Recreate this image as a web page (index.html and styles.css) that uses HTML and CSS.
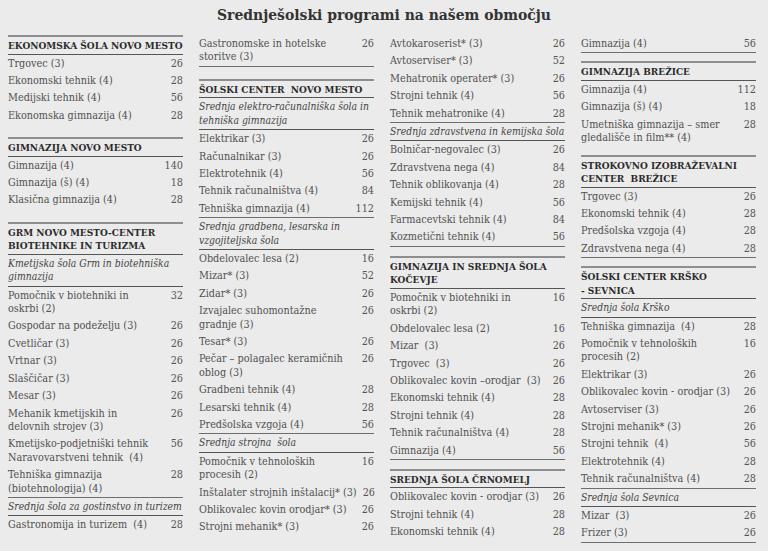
FILE: index.html
```html
<!DOCTYPE html>
<html lang="sl">
<head>
<meta charset="utf-8">
<title>Srednješolski programi na našem območju</title>
<link rel="stylesheet" href="styles.css">
</head>
<body>
<h1 class="title">Srednješolski programi na našem območju</h1>
<div class="cols">
  <div class="col">
    <div class="sec first">
      <div class="hdr">EKONOMSKA ŠOLA NOVO MESTO</div>
      <div class="row"><span class="lbl">Trgovec (3)</span><span class="num">26</span></div>
      <div class="row"><span class="lbl">Ekonomski tehnik (4)</span><span class="num">28</span></div>
      <div class="row"><span class="lbl">Medijski tehnik (4)</span><span class="num">56</span></div>
      <div class="row"><span class="lbl">Ekonomska gimnazija (4)</span><span class="num">28</span></div>
    </div>
    <div class="sec">
      <div class="hdr">GIMNAZIJA NOVO MESTO</div>
      <div class="row"><span class="lbl">Gimnazija (4)</span><span class="num">140</span></div>
      <div class="row"><span class="lbl">Gimnazija (š) (4)</span><span class="num">18</span></div>
      <div class="row"><span class="lbl">Klasična gimnazija (4)</span><span class="num">28</span></div>
    </div>
    <div class="sec">
      <div class="hdr">GRM NOVO MESTO-CENTER<br>BIOTEHNIKE IN TURIZMA</div>
      <div class="sub">Kmetijska šola Grm in biotehniška<br>gimnazija</div>
      <div class="row"><span class="lbl">Pomočnik v biotehniki in<br>oskrbi (2)</span><span class="num">32</span></div>
      <div class="row"><span class="lbl">Gospodar na podeželju (3)</span><span class="num">26</span></div>
      <div class="row"><span class="lbl">Cvetličar (3)</span><span class="num">26</span></div>
      <div class="row"><span class="lbl">Vrtnar (3)</span><span class="num">26</span></div>
      <div class="row"><span class="lbl">Slaščičar (3)</span><span class="num">26</span></div>
      <div class="row"><span class="lbl">Mesar (3)</span><span class="num">26</span></div>
      <div class="row"><span class="lbl">Mehanik kmetijskih in<br>delovnih strojev (3)</span><span class="num">26</span></div>
      <div class="row"><span class="lbl">Kmetijsko-podjetniški tehnik<br>Naravovarstveni tehnik&nbsp; (4)</span><span class="num">56</span></div>
      <div class="row end"><span class="lbl">Tehniška gimnazija<br>(biotehnologija) (4)</span><span class="num">28</span></div>
      <div class="sub">Srednja šola za gostinstvo in turizem</div>
      <div class="row"><span class="lbl">Gastronomija in turizem&nbsp; (4)</span><span class="num">28</span></div>
    </div>
  </div>

  <div class="col">
    <div class="row end"><span class="lbl">Gastronomske in hotelske<br>storitve (3)</span><span class="num">26</span></div>
    <div class="sec wide">
      <div class="hdr">ŠOLSKI CENTER&nbsp; NOVO MESTO</div>
      <div class="sub">Srednja elektro-računalniška šola in<br>tehniška gimnazija</div>
      <div class="row"><span class="lbl">Elektrikar (3)</span><span class="num">26</span></div>
      <div class="row"><span class="lbl">Računalnikar (3)</span><span class="num">26</span></div>
      <div class="row"><span class="lbl">Elektrotehnik (4)</span><span class="num">56</span></div>
      <div class="row"><span class="lbl">Tehnik računalništva (4)</span><span class="num">84</span></div>
      <div class="row end"><span class="lbl">Tehniška gimnazija (4)</span><span class="num">112</span></div>
      <div class="sub">Srednja gradbena, lesarska in<br>vzgojiteljska šola</div>
      <div class="row"><span class="lbl">Obdelovalec lesa (2)</span><span class="num">16</span></div>
      <div class="row"><span class="lbl">Mizar* (3)</span><span class="num">52</span></div>
      <div class="row"><span class="lbl">Zidar* (3)</span><span class="num">26</span></div>
      <div class="row"><span class="lbl">Izvajalec suhomontažne<br>gradnje (3)</span><span class="num">26</span></div>
      <div class="row"><span class="lbl">Tesar* (3)</span><span class="num">26</span></div>
      <div class="row"><span class="lbl">Pečar – polagalec keramičnih<br>oblog (3)</span><span class="num">26</span></div>
      <div class="row"><span class="lbl">Gradbeni tehnik (4)</span><span class="num">28</span></div>
      <div class="row"><span class="lbl">Lesarski tehnik (4)</span><span class="num">28</span></div>
      <div class="row end"><span class="lbl">Predšolska vzgoja (4)</span><span class="num">56</span></div>
      <div class="sub">Srednja strojna&nbsp; šola</div>
      <div class="row"><span class="lbl">Pomočnik v tehnoloških<br>procesih (2)</span><span class="num">16</span></div>
      <div class="row"><span class="lbl">Inštalater strojnih inštalacij* (3)</span><span class="num">26</span></div>
      <div class="row"><span class="lbl">Oblikovalec kovin orodjar* (3)</span><span class="num">26</span></div>
      <div class="row"><span class="lbl">Strojni mehanik* (3)</span><span class="num">26</span></div>
    </div>
  </div>

  <div class="col">
    <div class="row"><span class="lbl">Avtokaroserist* (3)</span><span class="num">26</span></div>
    <div class="row"><span class="lbl">Avtoserviser* (3)</span><span class="num">52</span></div>
    <div class="row"><span class="lbl">Mehatronik operater* (3)</span><span class="num">26</span></div>
    <div class="row"><span class="lbl">Strojni tehnik (4)</span><span class="num">56</span></div>
    <div class="row end"><span class="lbl">Tehnik mehatronike (4)</span><span class="num">28</span></div>
    <div class="sub">Srednja zdravstvena in kemijska šola</div>
    <div class="row"><span class="lbl">Bolničar-negovalec (3)</span><span class="num">26</span></div>
    <div class="row"><span class="lbl">Zdravstvena nega (4)</span><span class="num">84</span></div>
    <div class="row"><span class="lbl">Tehnik oblikovanja (4)</span><span class="num">28</span></div>
    <div class="row"><span class="lbl">Kemijski tehnik (4)</span><span class="num">56</span></div>
    <div class="row"><span class="lbl">Farmacevtski tehnik (4)</span><span class="num">84</span></div>
    <div class="row end"><span class="lbl">Kozmetični tehnik (4)</span><span class="num">56</span></div>
    <div class="sec after">
      <div class="hdr">GIMNAZIJA IN SREDNJA ŠOLA<br>KOČEVJE</div>
      <div class="row"><span class="lbl">Pomočnik v biotehniki in<br>oskrbi (2)</span><span class="num">16</span></div>
      <div class="row"><span class="lbl">Obdelovalec lesa (2)</span><span class="num">16</span></div>
      <div class="row"><span class="lbl">Mizar&nbsp; (3)</span><span class="num">26</span></div>
      <div class="row"><span class="lbl">Trgovec&nbsp; (3)</span><span class="num">26</span></div>
      <div class="row"><span class="lbl">Oblikovalec kovin –orodjar&nbsp; (3)</span><span class="num">26</span></div>
      <div class="row"><span class="lbl">Ekonomski tehnik (4)</span><span class="num">28</span></div>
      <div class="row"><span class="lbl">Strojni tehnik (4)</span><span class="num">28</span></div>
      <div class="row"><span class="lbl">Tehnik računalništva (4)</span><span class="num">28</span></div>
      <div class="row end"><span class="lbl">Gimnazija (4)</span><span class="num">56</span></div>
    </div>
    <div class="sec after">
      <div class="hdr">SREDNJA ŠOLA ČRNOMELJ</div>
      <div class="row"><span class="lbl">Oblikovalec kovin - orodjar (3)</span><span class="num">26</span></div>
      <div class="row"><span class="lbl">Strojni tehnik (4)</span><span class="num">28</span></div>
      <div class="row"><span class="lbl">Ekonomski tehnik (4)</span><span class="num">28</span></div>
    </div>
  </div>

  <div class="col">
    <div class="row end"><span class="lbl">Gimnazija (4)</span><span class="num">56</span></div>
    <div class="sec tight">
      <div class="hdr">GIMNAZIJA BREŽICE</div>
      <div class="row"><span class="lbl">Gimnazija (4)</span><span class="num">112</span></div>
      <div class="row"><span class="lbl">Gimnazija (š) (4)</span><span class="num">18</span></div>
      <div class="row"><span class="lbl">Umetniška gimnazija – smer<br>gledališče in film** (4)</span><span class="num">28</span></div>
    </div>
    <div class="sec tight">
      <div class="hdr">STROKOVNO IZOBRAŽEVALNI<br>CENTER&nbsp; BREŽICE</div>
      <div class="row"><span class="lbl">Trgovec (3)</span><span class="num">26</span></div>
      <div class="row"><span class="lbl">Ekonomski tehnik (4)</span><span class="num">28</span></div>
      <div class="row"><span class="lbl">Predšolska vzgoja (4)</span><span class="num">28</span></div>
      <div class="row end"><span class="lbl">Zdravstvena nega (4)</span><span class="num">28</span></div>
    </div>
    <div class="sec tight">
      <div class="hdr">ŠOLSKI CENTER KRŠKO<br>- SEVNICA</div>
      <div class="sub">Srednja šola Krško</div>
      <div class="row"><span class="lbl">Tehniška gimnazija&nbsp; (4)</span><span class="num">28</span></div>
      <div class="row"><span class="lbl">Pomočnik v tehnoloških<br>procesih (2)</span><span class="num">16</span></div>
      <div class="row"><span class="lbl">Elektrikar (3)</span><span class="num">26</span></div>
      <div class="row"><span class="lbl">Oblikovalec kovin - orodjar (3)</span><span class="num">26</span></div>
      <div class="row"><span class="lbl">Avtoserviser (3)</span><span class="num">26</span></div>
      <div class="row"><span class="lbl">Strojni mehanik* (3)</span><span class="num">26</span></div>
      <div class="row"><span class="lbl">Strojni tehnik&nbsp; (4)</span><span class="num">56</span></div>
      <div class="row"><span class="lbl">Elektrotehnik (4)</span><span class="num">28</span></div>
      <div class="row end"><span class="lbl">Tehnik računalništva (4)</span><span class="num">28</span></div>
      <div class="sub">Srednja šola Sevnica</div>
      <div class="row"><span class="lbl">Mizar&nbsp; (3)</span><span class="num">26</span></div>
      <div class="row end"><span class="lbl">Frizer (3)</span><span class="num">26</span></div>
    </div>
  </div>
</div>
</body>
</html>
```

FILE: styles.css
```css
html, body {
  margin: 0;
  padding: 0;
}
body {
  background: #ebebeb;
  font-family: "DejaVu Serif Condensed", "DejaVu Serif", serif;
  font-stretch: condensed;
  color: #505050;
  width: 768px;
  height: 551px;
  overflow: hidden;
}
.title {
  margin: 0;
  padding: 5px 0 10px;
  text-align: center;
  font-size: 15.5px;
  line-height: 20px;
  font-weight: bold;
  color: #333;
}
.cols {
  display: grid;
  grid-template-columns: repeat(4, 175px);
  column-gap: 16px;
  padding-left: 8px;
  align-items: start;
}
.col {
  display: flex;
  flex-direction: column;
}
.sec {
  margin-top: 13px;
}
.sec.first {
  margin-top: 0;
}
.sec.after {
  margin-top: 9px;
}
.sec.wide {
  margin-top: 12px;
}
.sec.tight {
  margin-top: 8px;
}
.hdr {
  border-top: 2px solid #8e8e8e;
  border-bottom: 1px solid #555;
  padding: 2px 0 1px;
  font-size: 10px;
  line-height: 13.5px;
  font-weight: bold;
  color: #2b2b2b;
  white-space: nowrap;
}
.sub {
  font-style: italic;
  font-size: 10.3px;
  line-height: 13.4px;
  padding: 2px 0;
  border-bottom: 1px solid #555;
  color: #444;
  white-space: nowrap;
}
.row {
  display: flex;
  justify-content: space-between;
  align-items: flex-start;
  padding: 2px 0;
  font-size: 10.75px;
  line-height: 13.4px;
}
.row.end {
  border-bottom: 1px solid #6e6e6e;
}
.lbl {
  white-space: nowrap;
}
.num {
  flex: none;
  padding-left: 6px;
  text-align: right;
  color: #555;
}
```
